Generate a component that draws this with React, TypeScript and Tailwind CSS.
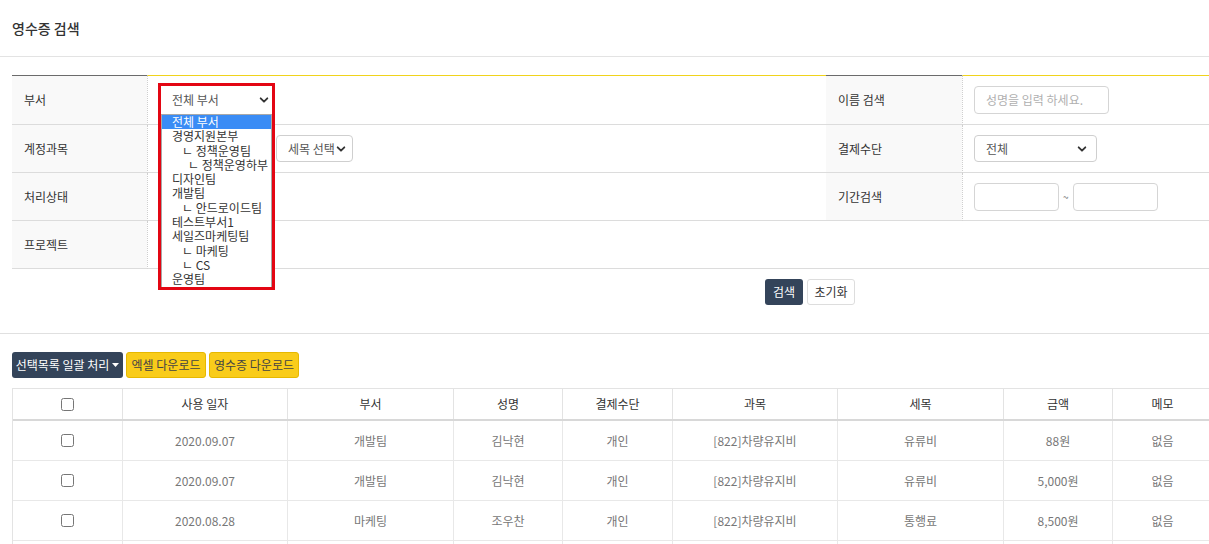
import React from "react";

const font = { fontFamily: '"Noto Sans CJK KR", "Noto Sans", sans-serif' };

function Chevron({ className = "" }: { className?: string }) {
  return (
    <svg viewBox="0 0 12 12" className={className} width="10" height="10">
      <polyline points="2,4 6,8 10,4" fill="none" stroke="#333" strokeWidth="2.2" strokeLinecap="round" strokeLinejoin="round" />
    </svg>
  );
}

function FakeSelect({ text, width, className = "" }: { text: string; width: string; className?: string }) {
  return (
    <div className={`flex h-[27px] items-center justify-between rounded-[4px] border border-[#cfcfcf] bg-white pl-[11px] pr-[6px] text-[12px] text-[#555] ${width} ${className}`}>
      <span>{text}</span>
      <Chevron />
    </div>
  );
}

const cols = "grid grid-cols-[110px_165px_166px_109px_110px_165px_166px_109px_100px_1fr]";

const rows = [
  ["2020.09.07", "개발팀", "김낙현", "개인", "[822]차량유지비", "유류비", "88원", "없음"],
  ["2020.09.07", "개발팀", "김낙현", "개인", "[822]차량유지비", "유류비", "5,000원", "없음"],
  ["2020.08.28", "마케팅", "조우찬", "개인", "[822]차량유지비", "통행료", "8,500원", "없음"],
];

const options: [string, number][] = [
  ["전체 부서", 0],
  ["경영지원본부", 0],
  ["ㄴ 정책운영팀", 1],
  ["ㄴ 정책운영하부", 2],
  ["디자인팀", 0],
  ["개발팀", 0],
  ["ㄴ 안드로이드팀", 1],
  ["테스트부서1", 0],
  ["세일즈마케팅팀", 0],
  ["ㄴ 마케팅", 1],
  ["ㄴ CS", 1],
  ["운영팀", 0],
];

export default function App() {
  return (
    <div className="relative h-[544px] w-[1209px] overflow-hidden bg-white text-[#333]" style={font}>
      <div className="w-[1620px]">
        {/* title */}
        <div className="flex h-[57px] items-center border-b border-[#e3e3e3] px-[12px]">
          <h1 className="text-[14px] font-medium text-[#333]">영수증 검색</h1>
        </div>

        {/* form */}
        <div className="mx-[12px] mt-[18px]">
          <div className="grid grid-cols-[135px_679px_136px_1fr] text-[12px]">
            {/* row 1 */}
            <div className="flex h-[50px] items-center border-t border-b border-t-[#6b6b6b] border-b-[#dcdcdc] bg-[#f9f9f9] pl-[12px]">부서</div>
            <div className="flex h-[50px] items-center border-t border-b border-l border-dotted border-l-[#cfcfcf] border-t-[#f0d31c] border-b-[#dcdcdc] pl-[13px]" style={{ borderTopStyle: "solid", borderBottomStyle: "solid" }}>
              <div className="flex h-[26px] w-[111px] items-center justify-between pl-[11px] pr-[3px] text-[#555]">
                <span>전체 부서</span>
                <Chevron />
              </div>
            </div>
            <div className="flex h-[50px] items-center border-t border-b border-t-[#6b6b6b] border-b-[#dcdcdc] bg-[#f9f9f9] pl-[12px]">이름 검색</div>
            <div className="flex h-[50px] items-center border-t border-b border-l border-dotted border-l-[#cfcfcf] border-t-[#f0d31c] border-b-[#dcdcdc] pl-[11px]" style={{ borderTopStyle: "solid", borderBottomStyle: "solid" }}>
              <div className="flex h-[28px] w-[135px] items-center rounded-[4px] border border-[#d5d5d5] pl-[11px] text-[12px] text-[#b0b0b0]">성명을 입력 하세요.</div>
            </div>

            {/* row 2 */}
            <div className="flex h-[48px] items-center border-b border-[#dcdcdc] bg-[#f9f9f9] pl-[12px]">계정과목</div>
            <div className="flex h-[48px] items-center gap-[4px] border-b border-l border-dotted border-l-[#cfcfcf] border-b-[#dcdcdc] pl-[13px]" style={{ borderBottomStyle: "solid" }}>
              <FakeSelect text="과목 선택" width="w-[111px]" />
              <FakeSelect text="세목 선택" width="w-[77px]" className="pl-[9px] pr-[5px] text-[11.5px]" />
            </div>
            <div className="flex h-[48px] items-center border-b border-[#dcdcdc] bg-[#f9f9f9] pl-[12px]">결제수단</div>
            <div className="flex h-[48px] items-center border-b border-l border-dotted border-l-[#cfcfcf] border-b-[#dcdcdc] pl-[11px]" style={{ borderBottomStyle: "solid" }}>
              <FakeSelect text="전체" width="w-[123px]" className="pr-[9px]" />
            </div>

            {/* row 3 */}
            <div className="flex h-[48px] items-center border-b border-[#dcdcdc] bg-[#f9f9f9] pl-[12px]">처리상태</div>
            <div className="flex h-[48px] items-center border-b border-l border-dotted border-l-[#cfcfcf] border-b-[#dcdcdc]" style={{ borderBottomStyle: "solid" }} />
            <div className="flex h-[48px] items-center border-b border-[#dcdcdc] bg-[#f9f9f9] pl-[12px]">기간검색</div>
            <div className="flex h-[48px] items-center border-b border-l border-dotted border-l-[#cfcfcf] border-b-[#dcdcdc] pl-[11px]" style={{ borderBottomStyle: "solid" }}>
              <div className="h-[28px] w-[85px] rounded-[4px] border border-[#d5d5d5]" />
              <span className="mx-[4px] text-[10px] text-[#777]">~</span>
              <div className="h-[28px] w-[85px] rounded-[4px] border border-[#d5d5d5]" />
            </div>

            {/* row 4 */}
            <div className="flex h-[48px] items-center border-b border-[#dcdcdc] bg-[#f9f9f9] pl-[12px]">프로젝트</div>
            <div className="col-span-3 flex h-[48px] items-center border-b border-l border-dotted border-l-[#cfcfcf] border-b-[#dcdcdc]" style={{ borderBottomStyle: "solid" }} />
          </div>

          {/* search buttons */}
          <div className="mt-[10px] flex justify-center gap-[4px] text-[12px]">
            <button className="h-[26px] w-[38px] rounded-[3px] bg-[#34445a] text-white">검색</button>
            <button className="h-[26px] w-[48px] rounded-[3px] border border-[#dddddd] bg-white text-[#333]">초기화</button>
          </div>
        </div>

        <div className="mt-[28px] border-b border-[#e0e0e0]" />

        {/* list */}
        <div className="mx-[12px] mt-[18px]">
          <div className="flex gap-[3px] text-[12px]">
            <button className="flex h-[26px] w-[111px] items-center justify-center gap-[3px] rounded-[3px] bg-[#34445a] text-white">
              선택목록 일괄 처리
              <svg width="7" height="4" viewBox="0 0 7 4"><polygon points="0,0 7,0 3.5,4" fill="#fff" /></svg>
            </button>
            <button className="h-[26px] w-[80px] rounded-[3px] border border-[#e6b800] bg-[#f9cc1a] text-[#444]">엑셀 다운로드</button>
            <button className="h-[26px] w-[90px] rounded-[3px] border border-[#e6b800] bg-[#f9cc1a] text-[#444]">영수증 다운로드</button>
          </div>

          <div className="mt-[10px] border-l border-t border-[#e3e3e3] text-[12px]">
            <div className={`${cols} h-[32px] border-b-2 border-[#d8d8d8] text-[#333]`}>
              <div className="flex items-center justify-center border-r border-[#e3e3e3]">
                <input type="checkbox" className="h-[13px] w-[13px]" />
              </div>
              {["사용 일자", "부서", "성명", "결제수단", "과목", "세목", "금액", "메모"].map((h) => (
                <div key={h} className="flex items-center justify-center border-r border-[#e3e3e3]">{h}</div>
              ))}
              <div />
            </div>
            {rows.map((r, i) => (
              <div key={i} className={`${cols} h-[40px] border-b border-[#e8e8e8] text-[#777]`}>
                <div className="flex items-center justify-center border-r border-[#e8e8e8]">
                  <input type="checkbox" className="h-[13px] w-[13px]" />
                </div>
                {r.map((c, j) => (
                  <div key={j} className="flex items-center justify-center border-r border-[#e8e8e8]">{c}</div>
                ))}
                <div />
              </div>
            ))}
            <div className={`${cols} h-[40px] border-b border-[#e8e8e8]`}>
              {Array.from({ length: 9 }).map((_, j) => (
                <div key={j} className="border-r border-[#e8e8e8]" />
              ))}
              <div />
            </div>
          </div>
        </div>
      </div>

      {/* open dropdown list overlay */}
      <div className="absolute left-[161px] top-[114px] w-[111px] border border-[#a8a8a8] bg-white text-[12px] text-[#333]">
        {options.map(([t, lvl], i) => (
          <div
            key={i}
            className={`h-[14.3px] leading-[14.3px] ${i === 0 ? "bg-[#3a8cf5] text-white" : ""} ${lvl === 0 ? "pl-[10px]" : lvl === 1 ? "pl-[20px]" : "pl-[26px]"}`}
          >
            {t}
          </div>
        ))}
      </div>

      {/* red annotation box */}
      <div className="pointer-events-none absolute left-[158px] top-[83px] h-[207px] w-[117px] border-[3px] border-[#e30613]" />
    </div>
  );
}
